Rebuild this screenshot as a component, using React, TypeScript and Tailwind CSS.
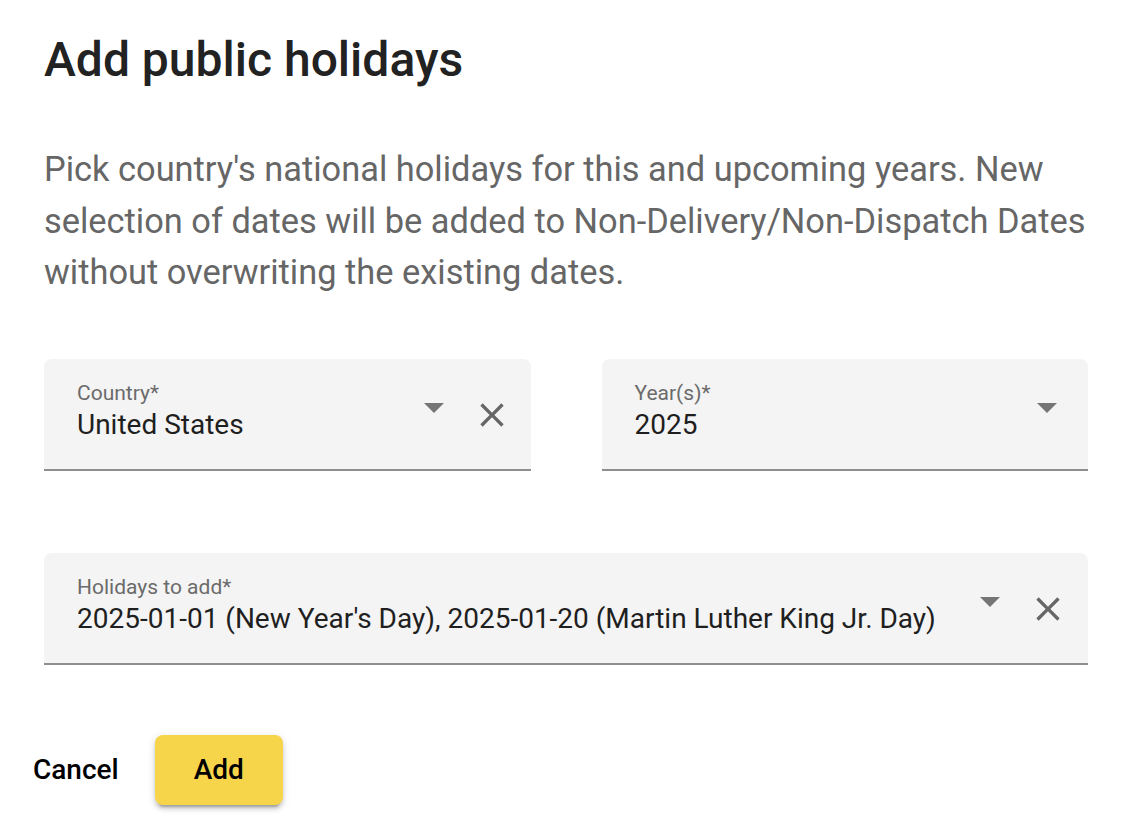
import React from "react";

function DropIcon() {
  return (
    <svg viewBox="0 0 24 24" className="w-[48px] h-[48px] fill-[#757575] shrink-0">
      <path d="M7 10l5 5 5-5z" />
    </svg>
  );
}

function ClearIcon() {
  return (
    <svg viewBox="0 0 24 24" className="w-[40px] h-[40px] fill-[#666666] shrink-0">
      <path d="M19 6.41 17.59 5 12 10.59 6.41 5 5 6.41 10.59 12 5 17.59 6.41 19 12 13.41 17.59 19 19 17.59 13.41 12z" />
    </svg>
  );
}

function Field({
  label,
  value,
  clearable,
  pr,
}: {
  label: string;
  value: string;
  clearable?: boolean;
  pr: string;
}) {
  return (
    <div
      className={`flex h-[112px] rounded-t-[8px] bg-[#f4f4f4] border-b-2 border-[#8e8e8e] pl-[33px] ${pr}`}
    >
      <div className="flex-1 min-w-0 pt-[22px]">
        <div className="text-[21px] leading-[24px] text-[#6b6b6b]">{label}</div>
        <div className="mt-[4px] text-[28px] leading-[32px] text-[#1f1f1f] whitespace-nowrap">
          {value}
        </div>
      </div>
      <div className="flex items-start">
        <div className="mt-[24px]">
          <DropIcon />
        </div>
        {clearable && (
          <div className="mt-[36px] ml-[14px]">
            <ClearIcon />
          </div>
        )}
      </div>
    </div>
  );
}

export default function App() {
  return (
    <div
      className="w-[1132px] h-[816px] bg-white overflow-hidden"
      style={{ fontFamily: "Roboto, 'Noto Sans', sans-serif" }}
    >
      <div className="px-[44px] pt-[31px]">
        {/* Title */}
        <h1 className="text-[48px] leading-[58px] font-medium text-[#222222]">
          Add public holidays
        </h1>

        {/* Description */}
        <p className="mt-[55px] text-[34.4px] leading-[51.5px] text-[#666666]">
          Pick country's national holidays for this and upcoming years. New selection of dates
          will be added to Non-Delivery/Non-Dispatch Dates without overwriting the existing
          dates.
        </p>

        {/* Country + year */}
        <div className="mt-[60px] grid grid-cols-2 gap-x-[71px]">
          <Field label="Country*" value="United States" clearable pr="pr-[19px]" />
          <Field label="Year(s)*" value="2025" pr="pr-[17px]" />
        </div>

        {/* Holidays */}
        <div className="mt-[82px]">
          <Field
            label="Holidays to add*"
            value="2025-01-01 (New Year's Day), 2025-01-20 (Martin Luther King Jr. Day)"
            clearable
            pr="pr-[20px]"
          />
        </div>
      </div>

      {/* Actions */}
      <div className="mt-[70px] flex items-center pl-[17px]">
        <button className="h-[70px] px-[16px] text-[28px] font-medium text-black">Cancel</button>
        <button className="ml-[20px] w-[128px] h-[70px] rounded-[8px] bg-[#f7d54a] text-[28px] font-medium text-black shadow-[0px_6px_2px_-4px_rgba(0,0,0,0.2),0px_4px_4px_0px_rgba(0,0,0,0.14),0px_2px_10px_0px_rgba(0,0,0,0.12)]">
          Add
        </button>
      </div>
    </div>
  );
}
